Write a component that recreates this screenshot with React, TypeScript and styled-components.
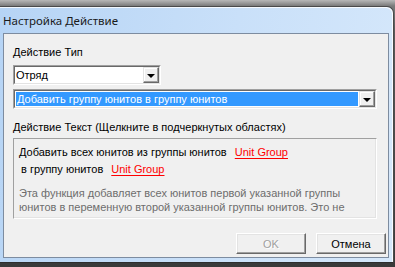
import React from "react";
import styled, { createGlobalStyle } from "styled-components";

const Global = createGlobalStyle`
  html, body { margin: 0; padding: 0; background: #3c3c3c; }
  body { font-family: "Liberation Sans", Arial, sans-serif; }
`;

const Screen = styled.div`
  width: 395px;
  height: 267px;
  overflow: hidden;
  box-sizing: border-box;
  padding-top: 6px;
  background: linear-gradient(#b8b8b8 0px, #7a7a7a 6px, #5a5a5a 30px, #3a3a3a 100%);
`;

const Window = styled.div`
  width: 394px;
  height: 257px;
  box-sizing: border-box;
  display: flex;
  flex-direction: column;
  padding: 0 4px 4px 3px;
  background: linear-gradient(100deg, #b6d4f5 0%, #c9e0f9 55%, #d6e8fb 100%);
  border-top: 1px solid #4a4a4a;
  border-right: 1px solid #4a4a4a;
  border-bottom: 1px solid #2e2e2e;
  border-top-right-radius: 7px;
  box-shadow: inset -1px 1px 0 rgba(255, 255, 255, 0.8);
`;

const TitleBar = styled.div`
  height: 26px;
  display: flex;
  align-items: center;
  font-family: "Noto Sans", "DejaVu Sans", sans-serif;
  font-size: 11.5px;
  color: #1a1a1a;
`;

const Client = styled.div`
  flex: 1;
  display: flex;
  flex-direction: column;
  align-items: flex-start;
  box-sizing: border-box;
  background: #f0f0f0;
  border: 1px solid #7d8ca0;
  padding: 12px 10px 0 9px;
  font-size: 11px;
  color: #000;
`;

const Label = styled.div<{ $mt?: number }>`
  height: 13px;
  line-height: 13px;
  margin-top: ${(p) => p.$mt ?? 0}px;
  white-space: nowrap;
`;

const Combo = styled.div<{ $w: number; $mt: number }>`
  width: ${(p) => p.$w}px;
  height: 20px;
  margin-top: ${(p) => p.$mt}px;
  box-sizing: border-box;
  border: 1px solid;
  border-color: #a0a0a0 #ffffff #ffffff #a0a0a0;
  display: flex;
`;

const ComboInner = styled.div`
  flex: 1;
  display: flex;
  box-sizing: border-box;
  border: 1px solid;
  border-color: #696969 #e3e3e3 #e3e3e3 #696969;
  background: #ffffff;
`;

const ComboText = styled.div<{ $selected?: boolean }>`
  flex: 1;
  margin: 1px;
  padding-left: ${(p) => (p.$selected ? 1 : 0)}px;
  line-height: 14px;
  white-space: nowrap;
  overflow: hidden;
  background: ${(p) => (p.$selected ? "#3399ff" : "transparent")};
  color: ${(p) => (p.$selected ? "#ffffff" : "#000000")};
`;

const ArrowButton = styled.div`
  width: 16px;
  box-sizing: border-box;
  border: 1px solid;
  border-color: #e3e3e3 #696969 #696969 #e3e3e3;
  box-shadow: inset -1px -1px 0 #a0a0a0, inset 1px 1px 0 #ffffff;
  background: #f0f0f0;
  display: flex;
  align-items: center;
  justify-content: center;
`;

const Triangle = styled.div`
  width: 0;
  height: 0;
  border-left: 4px solid transparent;
  border-right: 4px solid transparent;
  border-top: 4px solid #000;
  margin-top: 1px;
`;

const TextBox = styled.div`
  width: 364px;
  height: 81px;
  margin-top: 4px;
  box-sizing: border-box;
  border: 1px solid;
  border-color: #a0a0a0 #ffffff #ffffff #a0a0a0;
  box-shadow: inset -1px -1px 0 #e3e3e3;
  overflow: hidden;
  padding: 7px 0 0 5px;
`;

const ActionLine = styled.div<{ $indent?: number }>`
  height: 17px;
  line-height: 13px;
  padding-left: ${(p) => p.$indent ?? 0}px;
  white-space: nowrap;
`;

const Link = styled.span`
  color: #ff0000;
  text-decoration: underline;
  text-underline-offset: 2px;
  margin-left: 5px;
`;

const Description = styled.div`
  margin-top: 6px;
  line-height: 14px;
  color: #6d6d6d;
  white-space: nowrap;
`;

const ButtonRow = styled.div`
  align-self: stretch;
  display: flex;
  justify-content: flex-end;
  gap: 10px;
  margin-top: 14px;
  margin-right: -8px;
`;

const Button = styled.div<{ $disabled?: boolean }>`
  width: 70px;
  height: 21px;
  box-sizing: border-box;
  border: 1px solid;
  border-color: #ffffff #696969 #696969 #ffffff;
  box-shadow: inset -1px -1px 0 #a0a0a0, inset 1px 1px 0 #e3e3e3;
  background: #f0f0f0;
  display: flex;
  align-items: center;
  justify-content: center;
  color: ${(p) => (p.$disabled ? "#a0a0a0" : "#000")};
  text-shadow: ${(p) => (p.$disabled ? "1px 1px 0 #ffffff" : "none")};
`;

export default function App() {
  return (
    <Screen>
      <Global />
      <Window>
        <TitleBar>Настройка Действие</TitleBar>
        <Client>
          <Label>Действие Тип</Label>
          <Combo $w={148} $mt={6}>
            <ComboInner>
              <ComboText>Отряд</ComboText>
              <ArrowButton>
                <Triangle />
              </ArrowButton>
            </ComboInner>
          </Combo>
          <Combo $w={364} $mt={4}>
            <ComboInner>
              <ComboText $selected>Добавить группу юнитов в группу юнитов</ComboText>
              <ArrowButton>
                <Triangle />
              </ArrowButton>
            </ComboInner>
          </Combo>
          <Label $mt={12}>Действие Текст (Щелкните в подчеркнутых областях)</Label>
          <TextBox>
            <ActionLine>
              Добавить всех юнитов из группы юнитов <Link>Unit Group</Link>
            </ActionLine>
            <ActionLine $indent={2}>
              в группу юнитов <Link>Unit Group</Link>
            </ActionLine>
            <Description>
              Эта функция добавляет всех юнитов первой указанной группы
              <br />
              юнитов в переменную второй указанной группы юнитов. Это не
            </Description>
          </TextBox>
          <ButtonRow>
            <Button $disabled>OK</Button>
            <Button>Отмена</Button>
          </ButtonRow>
        </Client>
      </Window>
    </Screen>
  );
}
